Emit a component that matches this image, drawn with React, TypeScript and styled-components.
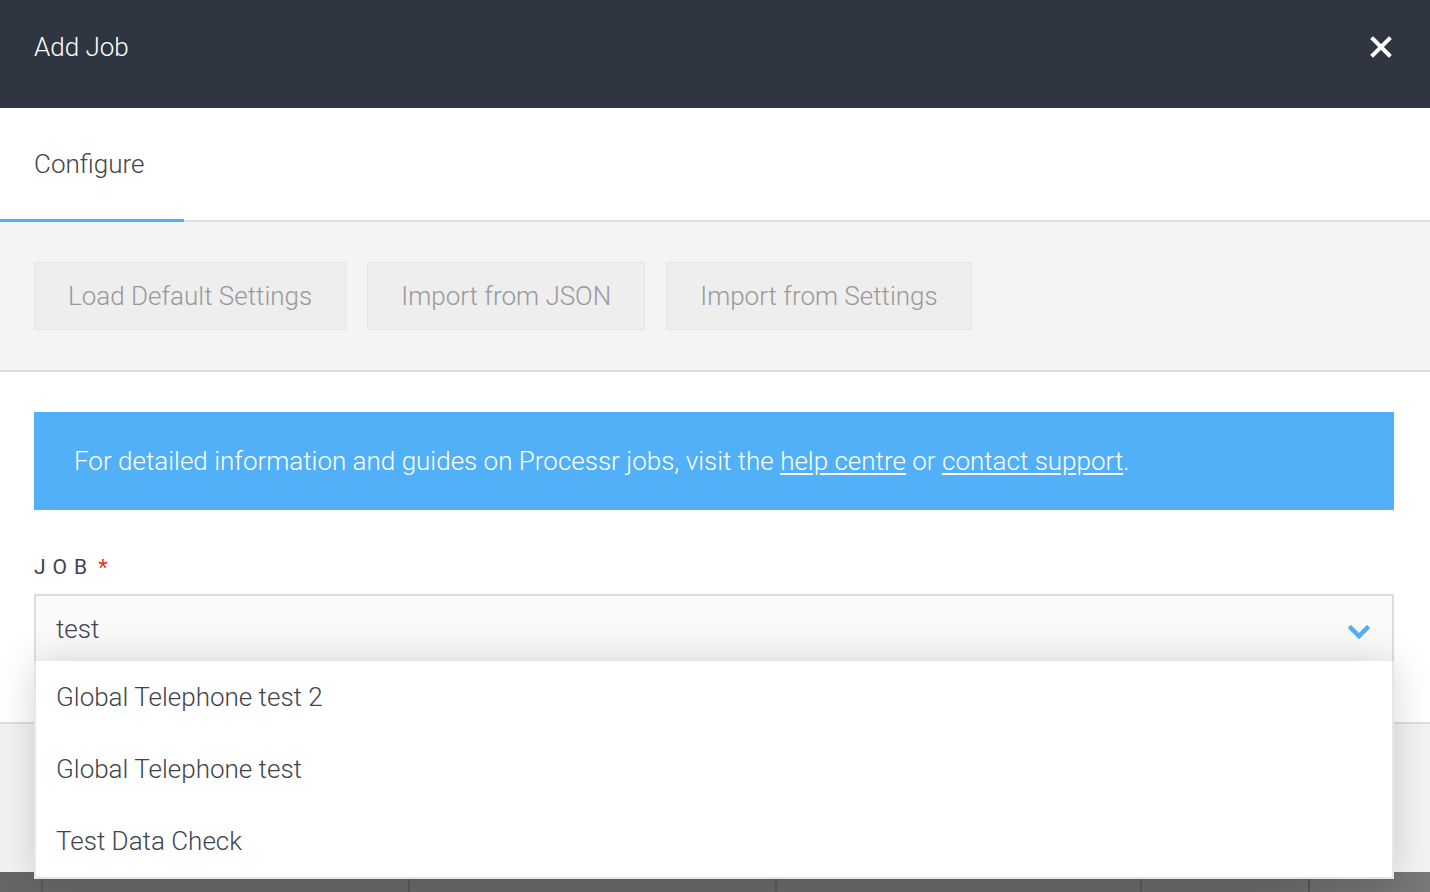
import React from "react";
import styled, { createGlobalStyle } from "styled-components";

const GlobalStyle = createGlobalStyle`
  html, body { margin: 0; padding: 0; height: 100%; }
  body {
    font-family: Roboto, "Noto Sans", "Liberation Sans", sans-serif;
    background: #ffffff;
    overflow: hidden;
  }
  #root { height: 100%; }
  * { box-sizing: border-box; }
`;

const Page = styled.div`
  display: flex;
  flex-direction: column;
  width: 1430px;
  height: 892px;
  overflow: hidden;
`;

const Header = styled.header`
  height: 108px;
  flex: none;
  background: #2f3541;
  display: flex;
  align-items: center;
  justify-content: space-between;
  padding: 0 38px 14px 34px;
`;

const Title = styled.h1`
  margin: 0;
  font-size: 26px;
  font-weight: 300;
  color: #ffffff;
`;

const CloseButton = styled.button`
  border: 0;
  background: transparent;
  padding: 0;
  width: 22px;
  height: 22px;
  display: flex;
  cursor: pointer;
`;

const Tabs = styled.nav`
  height: 114px;
  flex: none;
  display: flex;
  border-bottom: 2px solid #dedede;
  background: #fff;
`;

const Tab = styled.div<{ $active?: boolean }>`
  display: flex;
  align-items: center;
  padding: 0 40px 0 34px;
  font-size: 26px;
  font-weight: 300;
  color: #3f444c;
  margin-bottom: -2px;
  border-bottom: 3px solid ${(p) => (p.$active ? "#51b0f7" : "transparent")};
`;

const Toolbar = styled.div`
  flex: none;
  height: 150px;
  background: #f4f4f4;
  border-bottom: 2px solid #dddddd;
  display: flex;
  align-items: flex-start;
  gap: 21px;
  padding: 40px 34px 0;
`;

const ToolButton = styled.button`
  height: 68px;
  padding: 0 33px;
  background: #eeeeee;
  border: 1px solid #e4e4e4;
  font-family: Roboto, "Noto Sans", sans-serif;
  font-weight: 300;
  font-size: 26px;
  color: #999999;
  cursor: pointer;
`;

const Content = styled.section`
  flex: none;
  height: 352px;
  background: #fff;
  border-bottom: 2px solid #dddddd;
  padding: 40px 36px 0 34px;
  display: flex;
  flex-direction: column;
`;

const InfoBox = styled.div`
  height: 98px;
  background: #51b0f7;
  color: #ffffff;
  display: flex;
  align-items: center;
  padding: 0 40px;
  font-size: 26px;
  font-weight: 300;
`;

const InfoLink = styled.a`
  color: #ffffff;
  text-decoration: underline;
  text-underline-offset: 3px;
`;

const Label = styled.label`
  margin-top: 45px;
  font-size: 21px;
  letter-spacing: 7px;
  color: #3f444c;
  display: flex;
  align-items: center;
  gap: 4px;
  height: 24px;
`;

const Required = styled.span`
  color: #e8321f;
  font-size: 22px;
`;

const SelectWrap = styled.div`
  position: relative;
  margin-top: 15px;
`;

const SelectBox = styled.div`
  height: 67px;
  border: 2px solid #dddddd;
  border-bottom: 0;
  background: #fafafa;
  display: flex;
  align-items: center;
  justify-content: space-between;
  padding: 0 22px 0 20px;
  font-size: 26px;
  font-weight: 300;
  color: #3f444c;
`;

const Chevron = styled.svg`
  margin-top: 6px;
`;

const Options = styled.ul`
  position: absolute;
  top: 67px;
  left: 0;
  right: 0;
  margin: 0;
  padding: 0;
  list-style: none;
  background: #ffffff;
  border: 2px solid #e6e6e6;
  border-top: 0;
  box-shadow: 0 0 36px rgba(0, 0, 0, 0.16);
  z-index: 5;
`;

const Option = styled.li`
  height: 72px;
  display: flex;
  align-items: center;
  padding: 0 20px;
  font-size: 26px;
  font-weight: 300;
  color: #3f444c;
`;

const Footer = styled.div`
  flex: none;
  height: 148px;
  background: #f2f2f2;
`;

const Backdrop = styled.div`
  flex: 1;
  display: grid;
  grid-template-columns: 41px 367px 367px 365px 168px 1fr;
  background: linear-gradient(90deg, #666666 0%, #666666 88%, #787878 100%);
`;

const BackdropCell = styled.div`
  border-left: 2px solid #575757;
  &:first-child { border-left: 0; }
`;

export default function App() {
  return (
    <>
      <GlobalStyle />
      <Page>
        <Header>
          <Title>Add Job</Title>
          <CloseButton aria-label="Close">
            <svg width="22" height="22" viewBox="0 0 22 22">
              <path d="M3 3 L19 19 M19 3 L3 19" stroke="#ffffff" strokeWidth="4" strokeLinecap="square" />
            </svg>
          </CloseButton>
        </Header>
        <Tabs>
          <Tab $active>Configure</Tab>
        </Tabs>
        <Toolbar>
          <ToolButton>Load Default Settings</ToolButton>
          <ToolButton>Import from JSON</ToolButton>
          <ToolButton>Import from Settings</ToolButton>
        </Toolbar>
        <Content>
          <InfoBox>
            <span>
              For detailed information and guides on Processr jobs, visit the{" "}
              <InfoLink href="#">help centre</InfoLink> or{" "}
              <InfoLink href="#">contact support</InfoLink>.
            </span>
          </InfoBox>
          <Label>
            JOB <Required>*</Required>
          </Label>
          <SelectWrap>
            <SelectBox>
              <span>test</span>
              <Chevron width="22" height="14" viewBox="0 0 22 14">
                <path d="M3 3 L11 11 L19 3" fill="none" stroke="#51b0f7" strokeWidth="4.5" strokeLinecap="square" />
              </Chevron>
            </SelectBox>
            <Options>
              <Option>Global Telephone test 2</Option>
              <Option>Global Telephone test</Option>
              <Option>Test Data Check</Option>
            </Options>
          </SelectWrap>
        </Content>
        <Footer />
        <Backdrop>
          <BackdropCell />
          <BackdropCell />
          <BackdropCell />
          <BackdropCell />
          <BackdropCell />
          <BackdropCell />
        </Backdrop>
      </Page>
    </>
  );
}
